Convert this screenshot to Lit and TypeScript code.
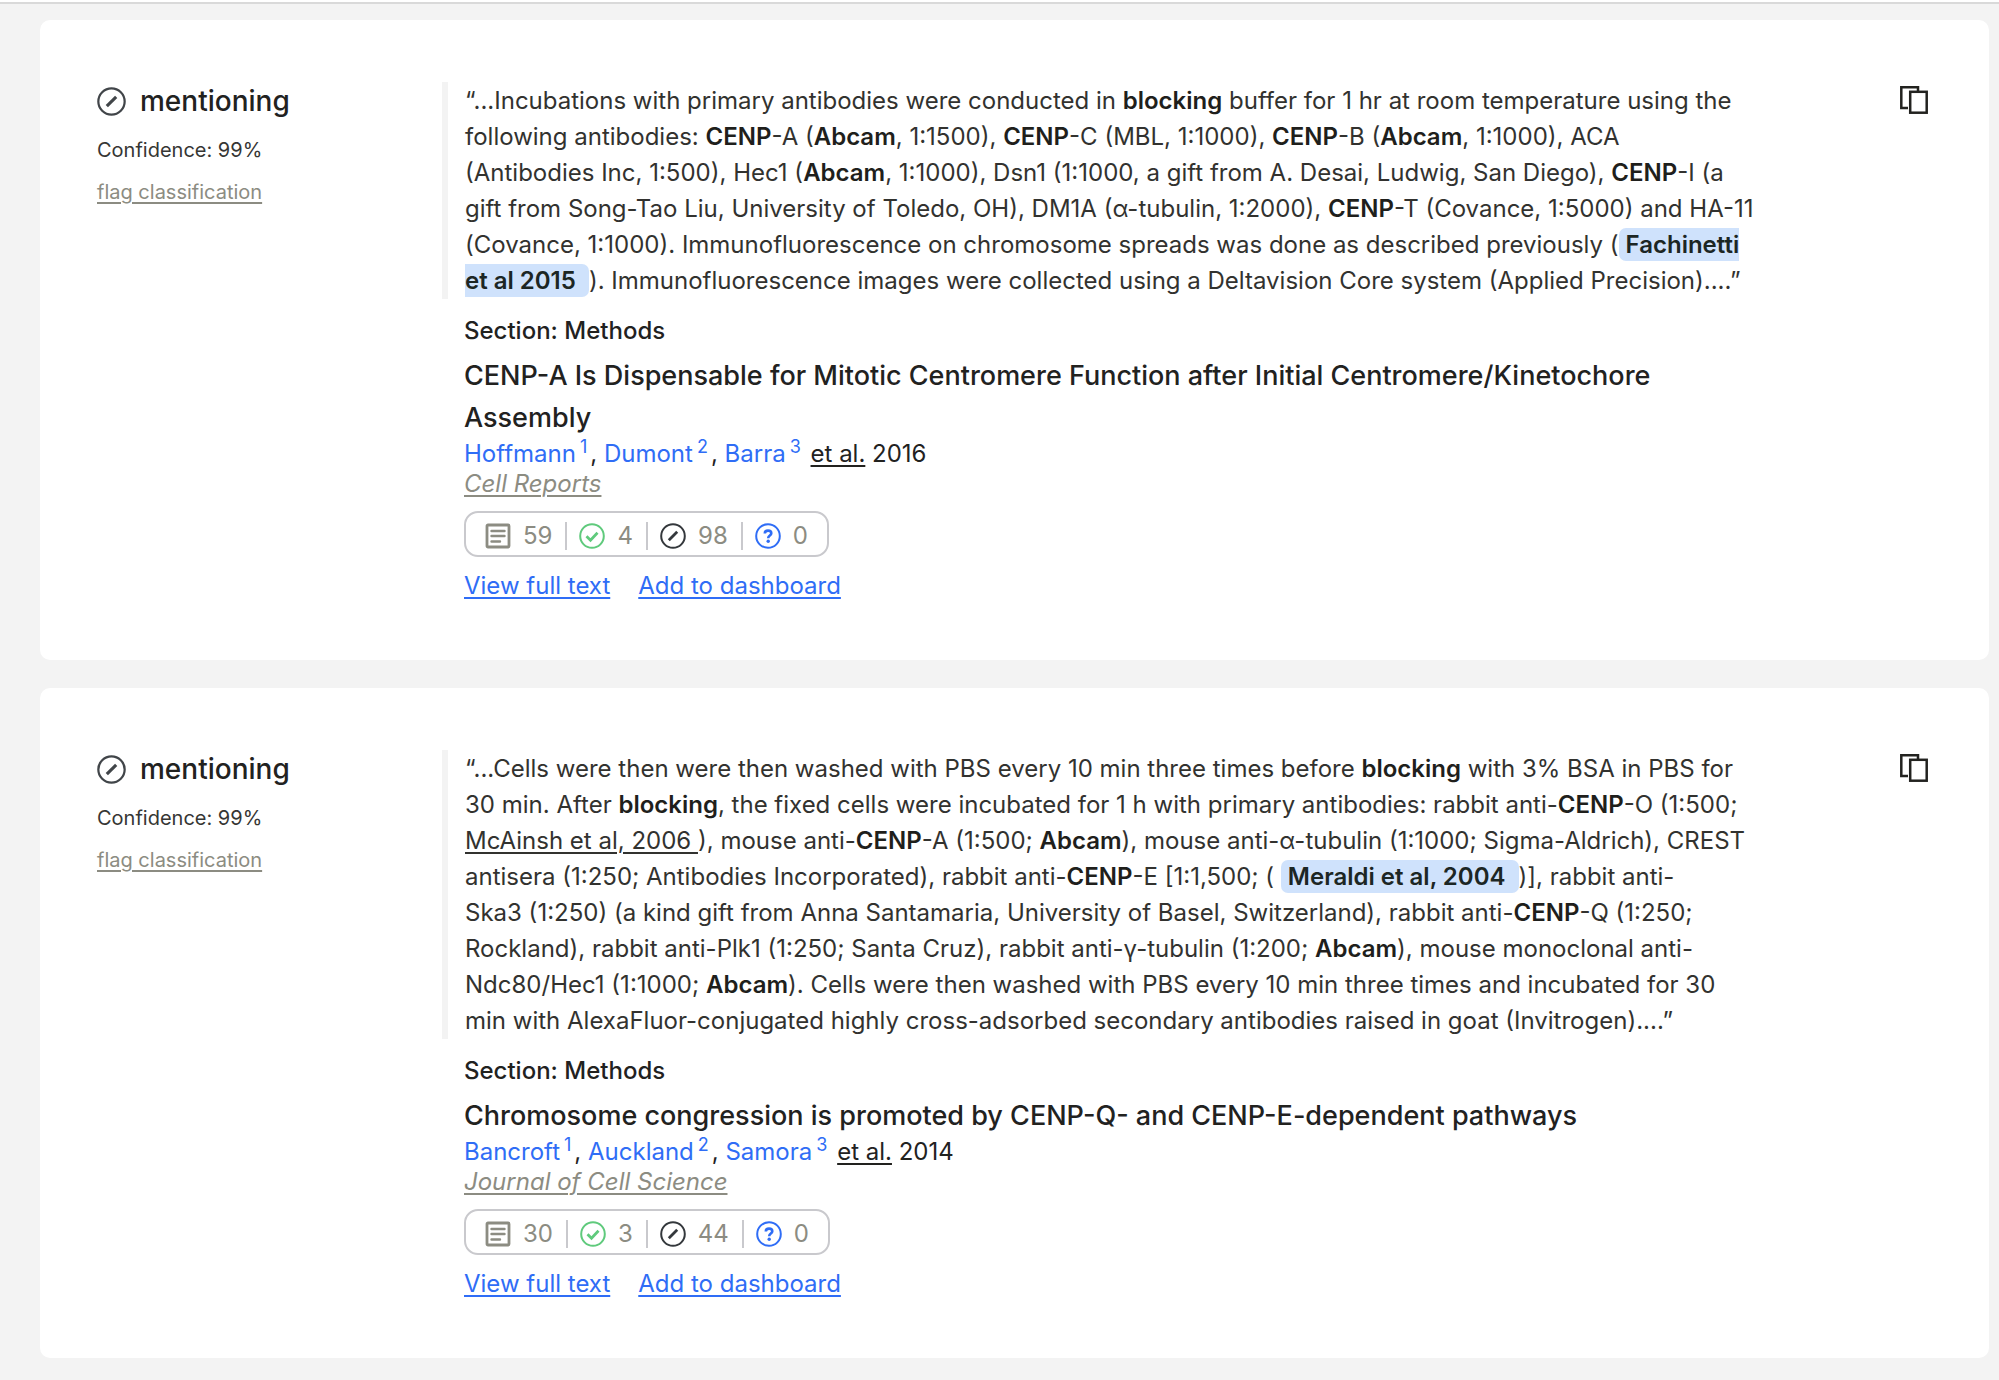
import { LitElement, html, css, svg, TemplateResult } from "lit";
import { customElement, property } from "lit/decorators.js";

interface Citation {
  quote: TemplateResult;
  section: string;
  title: string;
  authors: string[];
  year: number;
  journal: string;
  tallies: { publications: number; supporting: number; mentioning: number; contrasting: number };
}

const CITATIONS: Citation[] = [
  {
    quote: html`“...Incubations with primary antibodies were conducted in <b>blocking</b> buffer for 1 hr at room temperature using the following antibodies: <b>CENP</b>-A (<b>Abcam</b>, 1:1500), <b>CENP</b>-C (MBL, 1:1000), <b>CENP</b>-B (<b>Abcam</b>, 1:1000), ACA<br>(Antibodies Inc, 1:500), Hec1 (<b>Abcam</b>, 1:1000), Dsn1 (1:1000, a gift from A. Desai, Ludwig, San Diego), <b>CENP</b>-I (a gift from Song-Tao Liu, University of Toledo, OH), DM1A (α-tubulin, 1:2000), <b>CENP</b>-T (Covance, 1:5000) and HA-11 (Covance, 1:1000). Immunofluorescence on chromosome spreads was done as described previously (<a class="cited" href="#fachinetti-2015">Fachinetti et al 2015&nbsp;</a>). Immunofluorescence images were collected using a Deltavision Core system (Applied Precision)....”`,
    section: "Methods",
    title: "CENP-A Is Dispensable for Mitotic Centromere Function after Initial Centromere/Kinetochore Assembly",
    authors: ["Hoffmann", "Dumont", "Barra"],
    year: 2016,
    journal: "Cell Reports",
    tallies: { publications: 59, supporting: 4, mentioning: 98, contrasting: 0 },
  },
  {
    quote: html`“...Cells were then were then washed with PBS every 10 min three times before <b>blocking</b> with 3% BSA in PBS for 30 min. After <b>blocking</b>, the fixed cells were incubated for 1 h with primary antibodies: rabbit anti-<b>CENP</b>-O (1∶500; <a class="ref" href="#mcainsh-2006">McAinsh et al, 2006&nbsp;</a>), mouse anti-<b>CENP</b>-A (1∶500; <b>Abcam</b>), mouse anti-α-tubulin (1∶1000; Sigma-Aldrich), CREST antisera (1∶250; Antibodies Incorporated), rabbit anti-<b>CENP</b>-E [1∶1,500; ( <a class="cited" href="#meraldi-2004">Meraldi et al, 2004&nbsp;</a>)], rabbit anti-<br>Ska3 (1∶250) (a kind gift from Anna Santamaria, University of Basel, Switzerland), rabbit anti-<b>CENP</b>-Q (1∶250; Rockland), rabbit anti-Plk1 (1∶250; Santa Cruz), rabbit anti-γ-tubulin (1∶200; <b>Abcam</b>), mouse monoclonal anti-Ndc80/Hec1 (1∶1000; <b>Abcam</b>). Cells were then washed with PBS every 10 min three times and incubated for 30 min with AlexaFluor-conjugated highly cross-adsorbed secondary antibodies raised in goat (Invitrogen)....”`,
    section: "Methods",
    title: "Chromosome congression is promoted by CENP-Q- and CENP-E-dependent pathways",
    authors: ["Bancroft", "Auckland", "Samora"],
    year: 2014,
    journal: "Journal of Cell Science",
    tallies: { publications: 30, supporting: 3, mentioning: 44, contrasting: 0 },
  },
];

const GLYPHS = {
  publications: svg`<rect x="2" y="2" width="22" height="22" rx="1" stroke-width="2.8"/><path d="M6.5 8h13M6.5 13h13M6.5 18.5h8.5" stroke-width="2.4" stroke-linecap="round"/>`,
  supporting: svg`<circle cx="13" cy="13" r="11.8" stroke-width="2"/><path d="M7.5 13.2l4 4 7-7.4" stroke-width="2.8"/>`,
  mentioning: svg`<circle cx="13" cy="13" r="11.8" stroke-width="2"/><path d="M8.8 17.2l8.4-8.4" stroke-width="2.8"/>`,
  contrasting: svg`<circle cx="13" cy="13" r="11.8" stroke-width="2"/><path d="M9.8 10.4c0-1.8 1.4-2.8 3.2-2.8s3.3 1 3.3 2.7c0 2.3-3.1 2.2-3.1 4.9" stroke-width="2.6"/><circle cx="13.2" cy="18.3" r="1.7" fill="currentColor" stroke="none"/>`,
};

type Kind = keyof typeof GLYPHS;

@customElement("kind-icon")
class KindIcon extends LitElement {
  @property() kind: Kind = "mentioning";

  static styles = css`
    :host { display: block; flex: none; width: 26px; height: 26px; }
    svg { display: block; width: 100%; height: 100%; fill: none; stroke: currentColor; }
  `;

  render() {
    return html`<svg viewBox="0 0 26 26" aria-hidden="true">${GLYPHS[this.kind]}</svg>`;
  }
}

@customElement("citation-card")
class CitationCard extends LitElement {
  @property({ attribute: false }) citation!: Citation;

  static styles = css`
    :host {
      display: grid;
      grid-template-columns: 345px minmax(0, 1316px) minmax(28px, 1fr);
      align-items: start;
      padding: 62px 61px 57px 57px;
      border-radius: 10px;
      background: #fff;
    }
    a { color: inherit; }
    .status { display: flex; align-items: center; gap: 14px; margin: 0 0 16px; font-size: 28px; line-height: 38px; font-weight: 500; }
    .status kind-icon { width: 29px; height: 29px; color: #414549; }
    .confidence { margin: 0 0 14px; font-size: 20px; line-height: 28px; color: #363634; }
    .flag { display: block; padding: 0; border: 0; background: none; font: inherit; font-size: 20px; line-height: 28px; color: #8c8c82; text-decoration: underline; text-decoration-thickness: 2px; text-underline-offset: 3px; cursor: pointer; }
    blockquote { margin: 0 0 16px; padding: 1px 0 0 17px; border-left: 6px solid #f3f3f3; line-height: 36px; color: #32322f; }
    b { font-weight: 600; color: #1f1f1c; }
    .cited { padding: 2px 7px; border-radius: 7px; background: #cfe2fc; color: #1c2624; font-weight: 600; text-decoration: none; }
    .ref, .etal, .journal a, .actions a { text-decoration-thickness: 2px; text-underline-offset: 3px; }
    .paper { padding-left: 22px; }
    .section { margin: 0 0 8px; line-height: 32px; font-weight: 500; }
    h2 { margin: 0; font-size: 27px; line-height: 42px; font-weight: 500; }
    .authors, .journal { margin: 0; line-height: 30px; }
    .author { color: #2f6df6; text-decoration: none; }
    sup { margin: 0 3px 0 4px; font-size: 18px; line-height: 0; }
    .journal { font-style: italic; color: #8c8c82; }
    .tallies { display: inline-flex; align-items: center; box-sizing: border-box; height: 46px; margin: 12px 0; padding: 3px 19px 0; border: 2px solid #c9c9cd; border-radius: 14px; list-style: none; line-height: 32px; color: #8c8c82; }
    .tallies li { display: flex; align-items: center; gap: 12px; }
    .tallies li + li::before { content: ""; width: 2px; height: 28px; margin-left: 13px; background: #c9c9cd; }
    .supporting { color: #5fca7c; }
    .mentioning { color: #34383c; }
    .contrasting { color: #2f6df6; }
    .actions { display: flex; gap: 28px; line-height: 34px; color: #2f6df6; }
    .copy { display: block; justify-self: end; margin-top: 4px; padding: 0; border: 0; background: none; color: #22221f; cursor: pointer; }
    .copy svg { display: block; width: 28px; height: 28px; fill: none; stroke: currentColor; stroke-width: 2.5; }
  `;

  render() {
    const c = this.citation;
    const kinds: Kind[] = ["publications", "supporting", "mentioning", "contrasting"];
    return html`
      <div>
        <p class="status"><kind-icon kind="mentioning"></kind-icon>mentioning</p>
        <p class="confidence">Confidence: 99%</p>
        <button class="flag" type="button">flag classification</button>
      </div>
      <article>
        <blockquote>${c.quote}</blockquote>
        <div class="paper">
          <p class="section">Section: ${c.section}</p>
          <h2>${c.title}</h2>
          <p class="authors">
            ${c.authors.map((name, i) => html`${i ? ", " : ""}<a class="author" href="#author-${i + 1}">${name}<sup>${i + 1}</sup></a>`)}
            <a class="etal" href="#authors">et al.</a> ${c.year}
          </p>
          <p class="journal"><a href="#journal">${c.journal}</a></p>
          <ul class="tallies">
            ${kinds.map((k) => html`<li><kind-icon class=${k} kind=${k}></kind-icon>${c.tallies[k]}</li>`)}
          </ul>
          <div class="actions"><a href="#full-text">View full text</a><a href="#dashboard">Add to dashboard</a></div>
        </div>
      </article>
      <button class="copy" type="button" aria-label="Copy citation">
        <svg viewBox="0 0 28 28" aria-hidden="true"><path d="M8 22H1.3V1.3H18V5"/><rect x="10.2" y="5.8" width="16.5" height="20.9"/></svg>
      </button>
    `;
  }
}

@customElement("app-root")
class AppRoot extends LitElement {
  static styles = css`
    :host { display: flex; flex-direction: column; min-height: 100vh; background: #f3f3f3; color: #22221f; font: 24px Inter, "Noto Sans", sans-serif; }
    .edge { height: 2px; border-bottom: 2px solid #d9d9d9; background: #fff; }
    main { display: flex; flex-direction: column; gap: 28px; padding: 16px 10px 24px 40px; }
  `;

  render() {
    return html`
      <div class="edge"></div>
      <main>${CITATIONS.map((c) => html`<citation-card .citation=${c}></citation-card>`)}</main>
    `;
  }
}
